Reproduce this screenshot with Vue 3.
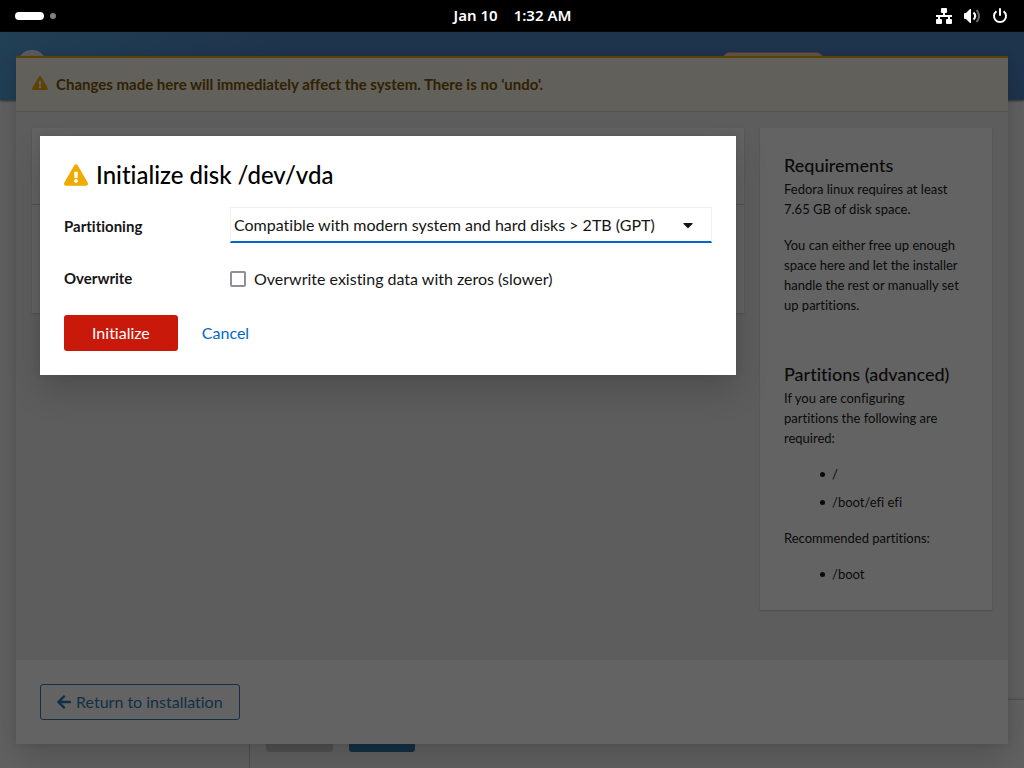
<script setup>
import { ref } from 'vue'

const partitioning = ref('gpt')
const overwrite = ref(false)
const required = ['/', '/boot/efi efi']
const recommended = ['/boot']
const warning =
  'M569.517 440.013C587.975 472.007 564.806 512 527.94 512H48.054c-36.937 0-59.999-40.055-41.577-71.987L246.423 23.985c18.467-32.009 64.72-31.951 83.154 0l239.94 416.028zM288 354c-25.405 0-46 20.595-46 46s20.595 46 46 46 46-20.595 46-46-20.595-46-46-46zm-43.673-165.346l7.418 136c.347 6.364 5.609 11.346 11.982 11.346h48.546c6.373 0 11.635-4.982 11.982-11.346l7.418-136c.375-6.874-5.098-12.654-11.982-12.654h-63.383c-6.884 0-12.356 5.78-11.981 12.654z'
</script>

<template>
  <div class="desktop">
    <header class="topbar">
      <div class="workspaces"><span class="current"></span><span class="dot"></span></div>
      <div class="clock"><span>Jan 10</span><span>1:32 AM</span></div>
      <div class="status">
        <svg width="16" height="16" viewBox="0 0 16 16" fill="#fff">
          <path d="M6 0h4a1 1 0 0 1 1 1v3a1 1 0 0 1-1 1H9v2h7v2h-2v2h1a1 1 0 0 1 1 1v3a1 1 0 0 1-1 1h-4a1 1 0 0 1-1-1v-3a1 1 0 0 1 1-1h1V9H4v2h1a1 1 0 0 1 1 1v3a1 1 0 0 1-1 1H1a1 1 0 0 1-1-1v-3a1 1 0 0 1 1-1h1V9H0V7h7V5H6a1 1 0 0 1-1-1V1a1 1 0 0 1 1-1z" />
        </svg>
        <svg width="16" height="16" viewBox="0 0 16 16" fill="none" stroke-width="2">
          <path d="M0 6a1 1 0 0 1 1-1h1l4-4h1v14H6l-4-4H1a1 1 0 0 1-1-1z" fill="#fff" />
          <path d="M9.500 4.500Q13 8 9.500 11.500" stroke="#fff" />
          <path d="M12.500 2Q17.500 8 12.500 14" stroke="#666" />
        </svg>
        <svg width="16" height="16" viewBox="0 0 16 16" fill="none" stroke="#fff" stroke-width="2">
          <path d="M4.500 3.200a6 6 0 1 0 7 0" />
          <path d="M8 1v6" stroke-linecap="round" />
        </svg>
      </div>
    </header>

    <div class="screen">
      <div class="installer">
        <div class="masthead"><span class="logo"></span><span class="badge"></span></div>
        <div class="wizard">
          <div class="steps"></div>
          <div class="step"><div class="actions"><span class="back"></span><span class="next"></span></div></div>
        </div>
      </div>

      <section class="storage">
        <div class="alert">
          <svg width="16" height="14" viewBox="0 0 576 512" fill="#f0ab00"><path :d="warning" /></svg>
          <strong>Changes made here will immediately affect the system. There is no 'undo'.</strong>
        </div>
        <div class="content">
          <div class="cards"><div class="card heading"></div><div class="card list"></div></div>
          <aside class="card help">
            <h2>Requirements</h2>
            <p>Fedora linux requires at least 7.65 GB of disk space.</p>
            <p>You can either free up enough space here and let the installer handle the rest or manually set up partitions.</p>
            <h2 class="second">Partitions (advanced)</h2>
            <p>If you are configuring partitions the following are required:</p>
            <ul><li v-for="item in required" :key="item">{{ item }}</li></ul>
            <p>Recommended partitions:</p>
            <ul><li v-for="item in recommended" :key="item">{{ item }}</li></ul>
          </aside>
        </div>
        <footer class="footer">
          <button type="button" class="button return">
            <svg width="14" height="16" viewBox="0 0 448 512" fill="currentColor"><path d="M257.500 445.100l-22.200 22.200c-9.400 9.400-24.600 9.400-33.900 0L7 273c-9.400-9.400-9.400-24.600 0-33.900L201.400 44.700c9.400-9.400 24.600-9.400 33.900 0l22.200 22.200c9.500 9.500 9.300 25-.4 34.300L136.600 216H424c13.300 0 24 10.700 24 24v32c0 13.300-10.700 24-24 24H136.600l120.500 114.800c9.800 9.300 10 24.800.4 34.300z" /></svg>
            Return to installation
          </button>
        </footer>
      </section>

      <div class="backdrop">
        <form class="dialog" role="dialog" aria-labelledby="dialog-title" @submit.prevent>
          <h1 id="dialog-title">
            <svg width="24" height="22" viewBox="0 0 576 512" fill="#f0ab00"><path :d="warning" /></svg>
            Initialize disk /dev/vda
          </h1>
          <div class="fields">
            <label class="label first" for="partitioning">Partitioning</label>
            <div class="select">
              <select id="partitioning" v-model="partitioning">
                <option value="gpt">Compatible with modern system and hard disks &gt; 2TB (GPT)</option>
              </select>
              <svg width="10" height="16" viewBox="0 0 320 512" fill="#151515"><path d="M31.300 192h257.300c17.800 0 26.700 21.500 14.100 34.100L174.100 354.800c-7.800 7.800-20.500 7.800-28.300 0L17.200 226.100C4.600 213.500 13.500 192 31.300 192z" /></svg>
            </div>
            <span class="label">Overwrite</span>
            <label class="check">
              <input v-model="overwrite" type="checkbox" />
              Overwrite existing data with zeros (slower)
            </label>
          </div>
          <div class="buttons">
            <button type="submit" class="button danger">Initialize</button>
            <button type="button" class="button link">Cancel</button>
          </div>
        </form>
      </div>
    </div>
  </div>
</template>

<style>
body {
  background: #606060;
}
</style>

<style scoped>
.desktop,
.desktop * {
  box-sizing: border-box;
}
.desktop {
  display: flex;
  flex-direction: column;
  min-height: 100vh;
  overflow: hidden;
  color: #151515;
  font: 16px/1.5 Lato, "Open Sans", sans-serif;
  font-variant-ligatures: none;
}
.topbar {
  display: grid;
  grid-template-columns: 1fr auto 1fr;
  align-items: center;
  height: 32px;
  padding: 0 16px 0 15px;
  background: #000;
  color: #fff;
  font: 600 15px/20px "Noto Sans", sans-serif;
}
.workspaces,
.clock,
.status {
  display: flex;
  align-items: center;
}
.workspaces {
  gap: 6px;
}
.current {
  width: 29px;
  height: 8px;
  border-radius: 4px;
  background: #fff;
}
.dot {
  width: 6px;
  height: 6px;
  border-radius: 50%;
  background: #808080;
}
.clock {
  gap: 16px;
  padding: 0 0 2px 2px;
}
.status {
  justify-content: flex-end;
  gap: 12px;
}
.screen {
  position: relative;
  display: flex;
  flex: 1;
  padding: 24px 16px;
}
.installer {
  position: absolute;
  inset: 0;
  display: flex;
  flex-direction: column;
  background: #fafafa;
}
.masthead {
  display: flex;
  justify-content: space-between;
  align-items: flex-start;
  height: 68px;
  padding: 18px 200px 0 17px;
  background: linear-gradient(75deg, #51a2da 0%, #4b83c4 30%, #4b83c4 100%);
  box-shadow: 0 1px 2px #777;
}
.logo {
  width: 30px;
  height: 30px;
  border-radius: 50%;
  background: #eee;
}
.badge {
  width: 102px;
  height: 28px;
  margin-top: 2px;
  border: 1px solid #e39b72;
  border-radius: 8px;
  background: #f4dfd3;
}
.wizard {
  display: flex;
  flex: 1;
}
.steps {
  width: 250px;
  border-right: 1px solid #c8c8c8;
}
.step {
  display: flex;
  flex: 1;
  flex-direction: column;
  justify-content: flex-end;
}
.actions {
  display: flex;
  gap: 16px;
  height: 69px;
  padding: 16px;
  border-top: 1px solid #d2d2d2;
  box-shadow: 0 -1px 2px #e0e0e0;
}
.back {
  width: 67px;
  border-radius: 3px;
  background: #d2d2d2;
}
.next {
  width: 66px;
  border-radius: 3px;
  background: #2f7bae;
}
.storage {
  position: relative;
  display: flex;
  flex: 1;
  flex-direction: column;
  background: #f0f0f0;
  box-shadow: 0 16px 32px rgba(3, 3, 3, 0.16), 0 0 8px rgba(3, 3, 3, 0.1);
}
.alert {
  display: flex;
  align-items: center;
  gap: 8px;
  height: 56px;
  padding: 0 16px;
  border-top: 2px solid #f0ab00;
  border-bottom: 1px solid #d2d2d2;
  background: #fdf7e7;
  color: #795600;
  font-size: 15px;
}
.alert strong {
  font-weight: 700;
}
.alert svg {
  margin-bottom: 4px;
}
.content {
  display: flex;
  flex: 1;
  align-items: flex-start;
  gap: 16px;
  padding: 16px;
}
.cards {
  flex: 1;
}
.card {
  background: #fff;
  box-shadow: 0 1px 2px rgba(3, 3, 3, 0.18);
}
.heading {
  height: 77px;
  border-bottom: 1px solid #d2d2d2;
}
.list {
  height: 108px;
}
.help {
  width: 232px;
  padding: 24px 24px 26px;
  font-size: 13px;
  line-height: 20px;
}
h1,
h2 {
  margin: 0;
  font-weight: 500;
}
h2 {
  font-size: 18px;
  line-height: 27px;
}
.second {
  margin-top: 46px;
}
p,
ul {
  margin: 0;
}
p {
  padding-right: 8px;
}
p + p,
p + ul,
ul + p {
  margin-top: 16px;
}
ul {
  padding-left: 36px;
  list-style: none;
}
li {
  display: flex;
  align-items: center;
  gap: 7px;
}
li::before {
  width: 5px;
  height: 5px;
  border-radius: 50%;
  background: #151515;
  content: "";
}
li + li {
  margin-top: 8px;
}
.footer {
  padding: 24px;
  background: #fff;
}
.button {
  height: 36px;
  padding: 0 16px;
  border: 0;
  border-radius: 3px;
  background: none;
  font: inherit;
  font-variant-ligatures: none;
}
.return {
  display: flex;
  align-items: center;
  gap: 5px;
  border: 1px solid #2b78ad;
  color: #2b78ad;
}
.backdrop {
  position: absolute;
  inset: 0;
  display: flex;
  align-items: flex-start;
  padding: 104px 288px 24px 40px;
  background: rgba(3, 3, 3, 0.62);
}
.dialog {
  display: grid;
  flex: 1;
  gap: 24px;
  padding: 24px;
  background: #fff;
  box-shadow: 0 16px 32px rgba(3, 3, 3, 0.16), 0 0 8px rgba(3, 3, 3, 0.1);
}
h1 {
  display: flex;
  align-items: center;
  gap: 8px;
  margin-bottom: -8px;
  padding-bottom: 2px;
  color: #000;
  font-size: 24px;
  line-height: 29px;
}
.fields {
  display: grid;
  grid-template-columns: 150px 1fr;
  gap: 24px 16px;
  align-items: start;
}
.label {
  font-size: 15px;
  font-weight: 700;
  line-height: 22px;
}
.first {
  padding-top: 8px;
}
.select {
  position: relative;
}
select {
  display: block;
  width: 100%;
  height: 36px;
  padding: 0 32px 0 3px;
  border: 1px solid #f0f0f0;
  border-bottom: 2px solid #06c;
  border-radius: 0;
  appearance: none;
  background: #fff;
  color: #151515;
  font: inherit;
  font-variant-ligatures: none;
}
.select svg {
  position: absolute;
  top: 10px;
  right: 19px;
  pointer-events: none;
}
.check {
  display: flex;
  align-items: center;
  gap: 8px;
}
input {
  width: 16px;
  height: 16px;
  margin: 0;
  border: 2px solid #8f8f9d;
  border-radius: 2px;
  appearance: none;
}
input:checked {
  background: #06c;
}
.buttons {
  display: flex;
  gap: 8px;
}
.danger {
  padding: 0 28px;
  background: #c9190b;
  color: #fff;
}
.link {
  color: #06c;
}
</style>
